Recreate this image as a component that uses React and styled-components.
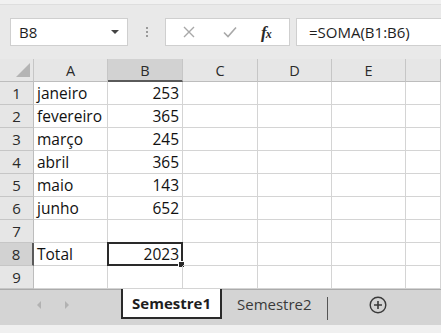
import React from 'react';
import styled, { createGlobalStyle } from 'styled-components';

const GlobalStyle = createGlobalStyle`
  html, body {
    margin: 0;
    padding: 0;
    background: #ffffff;
    overflow: hidden;
  }
  body {
    font-family: 'Open Sans', 'Noto Sans', sans-serif;
    color: #262626;
  }
`;

const Window = styled.div`
  width: 441px;
  height: 333px;
  display: flex;
  flex-direction: column;
  background: #ffffff;
`;

const TopEdge = styled.div`
  height: 4px;
  background: #f1f1f1;
  border-bottom: 1px solid #dedede;
`;

const FormulaBar = styled.div`
  height: 54px;
  box-sizing: border-box;
  background: #e9e9e9;
  display: flex;
  align-items: flex-start;
  padding: 13px 0 0 10px;
`;

const NameBox = styled.div`
  width: 118px;
  height: 28px;
  box-sizing: border-box;
  background: #ffffff;
  border: 1px solid #cfcfcf;
  display: flex;
  align-items: center;
  justify-content: space-between;
  padding: 0 8px 0 8px;
  font-size: 15px;
  color: #1e1e1e;
`;

const Caret = styled.span`
  width: 0;
  height: 0;
  border-left: 4px solid transparent;
  border-right: 4px solid transparent;
  border-top: 4px solid #444444;
`;

const Grip = styled.div`
  width: 37px;
  height: 28px;
  display: flex;
  flex-direction: column;
  align-items: center;
  justify-content: center;
  gap: 2px;
  span {
    width: 2px;
    height: 2px;
    background: #9a9a9a;
  }
`;

const ButtonBox = styled.div`
  width: 125px;
  height: 28px;
  box-sizing: border-box;
  background: #ffffff;
  border: 1px solid #cfcfcf;
  display: flex;
  align-items: center;
  padding-left: 17px;
`;

const IconSlot = styled.div`
  width: ${p => p.w}px;
  display: flex;
  align-items: center;
`;

const Fx = styled.span`
  font-family: 'Liberation Serif', serif;
  font-style: italic;
  font-weight: bold;
  font-size: 17px;
  line-height: 1;
  color: #2a2a2a;
  letter-spacing: -1px;
  small {
    font-size: 12px;
  }
`;

const FormulaBox = styled.div`
  flex: 1;
  height: 28px;
  box-sizing: border-box;
  margin-left: 6px;
  background: #ffffff;
  border: 1px solid #cfcfcf;
  border-right: none;
  display: flex;
  align-items: center;
  padding-left: 12px;
  font-size: 15px;
  color: #1e1e1e;
`;

const Sheet = styled.div`
  display: grid;
  grid-template-columns: 34px 74px 75px 75px 74px 74px 35px;
  grid-auto-rows: 23px;
  flex: none;
`;

const Corner = styled.div`
  position: relative;
  background: #e6e6e6;
  border-right: 1px solid #c6c6c6;
  border-bottom: 1px solid #bdbdbd;
  box-sizing: border-box;
  &::after {
    content: '';
    position: absolute;
    right: 3px;
    bottom: 4px;
    width: 0;
    height: 0;
    border-left: 14px solid transparent;
    border-bottom: 14px solid #b4b4b4;
  }
`;

const ColHead = styled.div`
  box-sizing: border-box;
  background: ${p => (p.active ? '#d2d2d2' : '#e6e6e6')};
  border-right: 1px solid #c6c6c6;
  border-bottom: ${p => (p.active ? '2px solid #5a5a5a' : '1px solid #bdbdbd')};
  display: flex;
  align-items: center;
  justify-content: center;
  font-size: 14.5px;
  color: #2a2a2a;
  padding-top: ${p => (p.active ? '1px' : '0')};
`;

const RowHead = styled.div`
  box-sizing: border-box;
  background: ${p => (p.active ? '#d2d2d2' : '#e6e6e6')};
  border-right: ${p => (p.active ? '2px solid #5a5a5a' : '1px solid #bdbdbd')};
  border-bottom: 1px solid #c6c6c6;
  display: flex;
  align-items: center;
  justify-content: center;
  font-size: 15px;
  color: #2a2a2a;
`;

const Cell = styled.div`
  position: relative;
  box-sizing: border-box;
  border-right: 1px solid #d4d4d4;
  border-bottom: 1px solid #d4d4d4;
  display: flex;
  align-items: center;
  justify-content: ${p => (p.num ? 'flex-end' : 'flex-start')};
  padding: 0 3px;
  font-size: 15.5px;
  color: #111111;
  white-space: nowrap;
`;

const Selection = styled.div`
  position: absolute;
  left: -1px;
  top: -1px;
  right: -1px;
  bottom: -1px;
  border: 2px solid #2a2a2a;
  pointer-events: none;
  &::after {
    content: '';
    position: absolute;
    right: -4px;
    bottom: -4px;
    width: 5px;
    height: 5px;
    background: #2a2a2a;
    border: 1px solid #ffffff;
  }
`;

const TabBar = styled.div`
  height: 36px;
  box-sizing: border-box;
  background: #d4d4d4;
  border-top: 1px solid #ababab;
  display: flex;
  align-items: flex-start;
`;

const Nav = styled.div`
  width: 121px;
  height: 100%;
  display: flex;
  align-items: center;
  padding-left: 37px;
  box-sizing: border-box;
  gap: 24px;
  padding-bottom: 5px;
`;

const Arrow = styled.span`
  width: 0;
  height: 0;
  border-top: 4px solid transparent;
  border-bottom: 4px solid transparent;
  ${p => (p.dir === 'left' ? 'border-right: 4px solid #b2b2b2;' : 'border-left: 4px solid #b2b2b2;')}
`;

const Tab = styled.div`
  box-sizing: border-box;
  height: 30px;
  margin-top: -1px;
  display: flex;
  align-items: center;
  justify-content: center;
  font-size: 15px;
  padding: ${p => (p.active ? '0' : '0 15px')};
  width: ${p => (p.active ? '101px' : 'auto')};
  font-weight: ${p => (p.active ? 700 : 400)};
  color: ${p => (p.active ? '#1e1e1e' : '#3a3a3a')};
  background: ${p => (p.active ? '#ffffff' : 'transparent')};
  border: ${p => (p.active ? '2px solid #2a2a2a' : 'none')};
  border-top: none;
`;

const TabDivider = styled.div`
  width: 1px;
  height: 23px;
  margin-top: 7px;
  background: #555555;
`;

const AddSheet = styled.div`
  width: 100px;
  height: 30px;
  display: flex;
  align-items: center;
  justify-content: center;
`;

const BottomEdge = styled.div`
  flex: 1;
  background: #f0f0f0;
`;

const cols = ['A', 'B', 'C', 'D', 'E', ''];
const rows = [
  ['janeiro', '253'],
  ['fevereiro', '365'],
  ['março', '245'],
  ['abril', '365'],
  ['maio', '143'],
  ['junho', '652'],
  ['', ''],
  ['Total', '2023'],
  ['', ''],
];

export default function App() {
  return (
    <Window>
      <GlobalStyle />
      <TopEdge />
      <FormulaBar>
        <NameBox>
          <span>B8</span>
          <Caret />
        </NameBox>
        <Grip>
          <span />
          <span />
          <span />
        </Grip>
        <ButtonBox>
          <IconSlot w={40}>
            <svg width="12" height="12" viewBox="0 0 12 12">
              <path d="M1 1 L11 11 M11 1 L1 11" stroke="#a8a8a8" strokeWidth="1.4" fill="none" />
            </svg>
          </IconSlot>
          <IconSlot w={38}>
            <svg width="14" height="12" viewBox="0 0 14 12">
              <path d="M1 6.5 L5 10.5 L13 1.5" stroke="#a8a8a8" strokeWidth="1.6" fill="none" />
            </svg>
          </IconSlot>
          <IconSlot w={22}>
            <Fx>
              f<small>x</small>
            </Fx>
          </IconSlot>
        </ButtonBox>
        <FormulaBox>=SOMA(B1:B6)</FormulaBox>
      </FormulaBar>
      <Sheet>
        <Corner />
        {cols.map((c, i) => (
          <ColHead key={i} active={c === 'B'}>
            {c}
          </ColHead>
        ))}
        {rows.map((r, i) => (
          <React.Fragment key={i}>
            <RowHead active={i === 7}>{i + 1}</RowHead>
            <Cell>{r[0]}</Cell>
            <Cell num>
              {r[1]}
              {i === 7 && <Selection />}
            </Cell>
            <Cell />
            <Cell />
            <Cell />
            <Cell />
          </React.Fragment>
        ))}
      </Sheet>
      <TabBar>
        <Nav>
          <Arrow dir="left" />
          <Arrow dir="right" />
        </Nav>
        <Tab active>Semestre1</Tab>
        <Tab>Semestre2</Tab>
        <TabDivider />
        <AddSheet>
          <svg width="18" height="18" viewBox="0 0 18 18">
            <circle cx="9" cy="9" r="7.8" stroke="#3a3a3a" strokeWidth="1.4" fill="none" />
            <path d="M9 5 V13 M5 9 H13" stroke="#3a3a3a" strokeWidth="1.6" />
          </svg>
        </AddSheet>
      </TabBar>
      <BottomEdge />
    </Window>
  );
}
